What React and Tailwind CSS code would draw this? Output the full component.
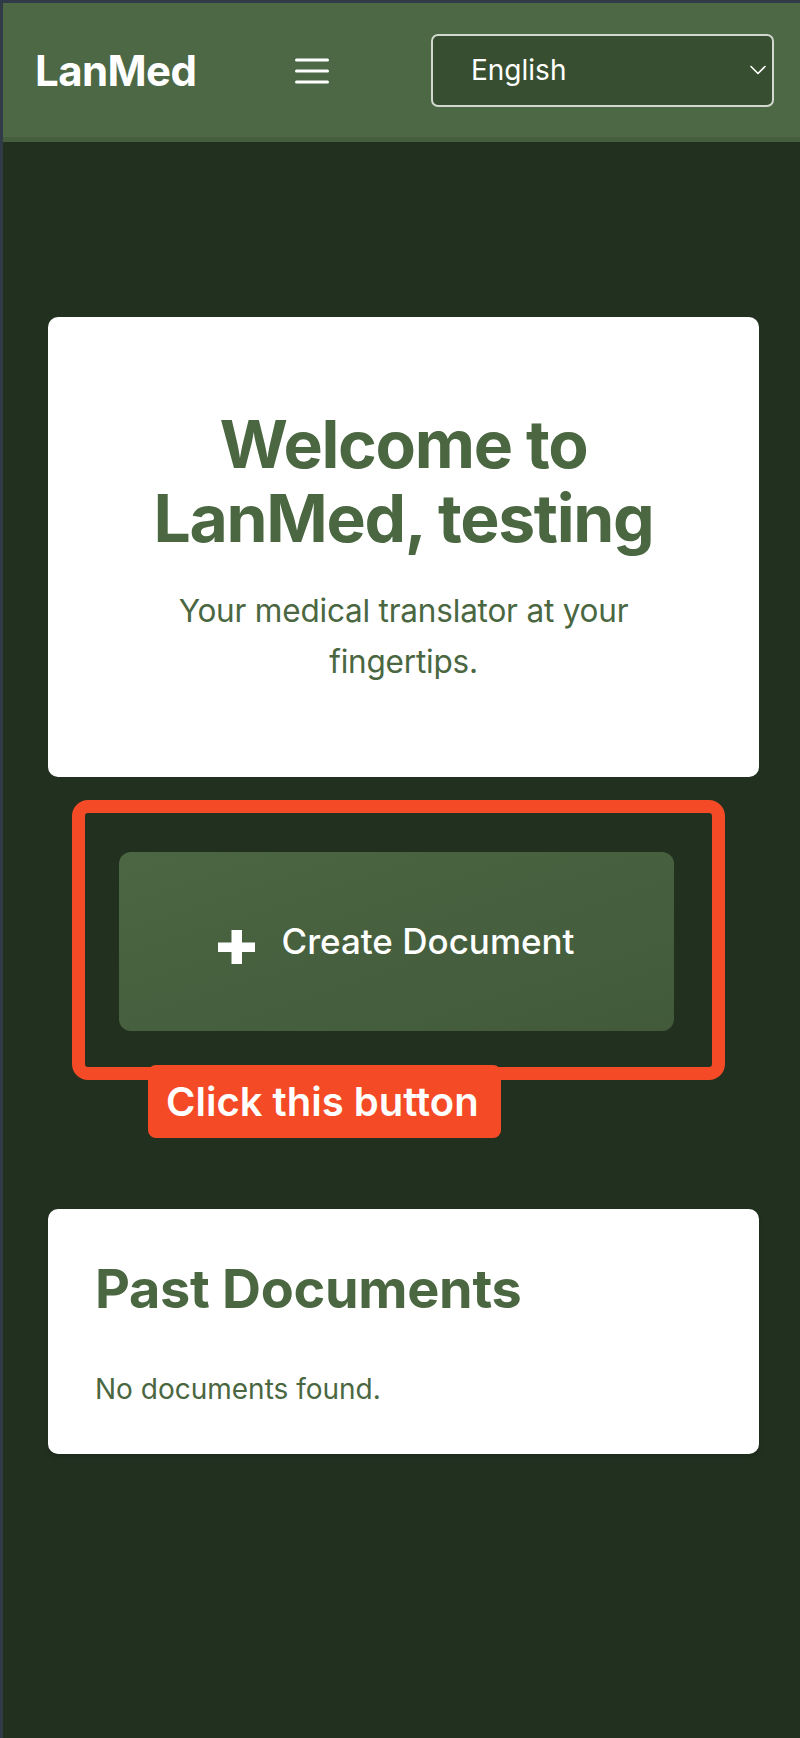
import { useState } from "react";

function Hamburger() {
  return (
    <svg width="34" height="26" viewBox="0 0 34 26" fill="none">
      <path d="M1.5 2h31M1.5 13h31M1.5 24h31" stroke="white" strokeWidth="3" strokeLinecap="round" />
    </svg>
  );
}

function Chevron() {
  return (
    <svg width="16" height="10" viewBox="0 0 16 10" fill="none">
      <path d="M1 1.5l7 7 7-7" stroke="white" strokeWidth="1.6" strokeLinecap="round" strokeLinejoin="round" />
    </svg>
  );
}

function PlusIcon() {
  return (
    <svg width="37" height="34" viewBox="0 0 37 34" fill="white">
      <rect x="0" y="12.5" width="37" height="9.5" />
      <rect x="13.5" y="0" width="10.5" height="34" />
    </svg>
  );
}

export default function App() {
  const [lang] = useState("English");

  return (
    <div className="min-h-screen bg-[#223020] border-l-[3px] border-t-[3px] border-[#313b48] font-['Inter',sans-serif]">
      <header className="h-[139px] bg-[#4c6844] border-b-[5px] border-[#455e3e] flex items-center pl-[32px] pr-[26px]">
        <h1 className="text-[42px] font-bold text-white tracking-[-0.6px] leading-none pt-[2px]">LanMed</h1>
        <button className="ml-[99px] mt-[2px]">
          <Hamburger />
        </button>
        <div className="ml-auto w-[343px] h-[73px] rounded-[7px] border-2 border-[#d3d8cf] bg-[#374f30] flex items-center justify-between pl-[38px] pr-[6px]">
          <span className="text-[28px] text-white leading-none">{lang}</span>
          <Chevron />
        </div>
      </header>

      <main className="pl-[45px] pr-[41px] pt-[175px] pb-[60px]">
        <section className="bg-white rounded-[10px] px-[47px] pt-[90px] pb-[90px] text-center text-[#4a6741]">
          <h2 className="text-[66px] leading-[74px] font-bold tracking-[-1.3px]">Welcome to LanMed, testing</h2>
          <p className="mt-[30px] mx-auto max-w-[520px] text-[31.5px] leading-[51px] tracking-[-0.2px]">
            Your medical translator at your fingertips.
          </p>
        </section>

        <div className="relative ml-[71px] w-[555px] mt-[75px]">
          <button className="w-full h-[179px] rounded-[12px] bg-linear-to-br from-[#4b6643] to-[#425a3a] flex items-center justify-center gap-[26px] text-white">
            <span className="mt-[11px]"><PlusIcon /></span>
            <span className="text-[35px] font-medium leading-none">Create Document</span>
          </button>
          <div className="absolute -left-[47px] -top-[52px] -right-[51px] -bottom-[49px] border-[13px] border-[#f44b26] rounded-[16px] pointer-events-none" />
          <div className="absolute left-[29px] top-[213px] h-[73px] w-[353px] bg-[#f44b26] rounded-[8px] flex items-center px-[18px]">
            <span className="text-[40px] font-semibold text-white leading-none whitespace-nowrap">Click this button</span>
          </div>
        </div>

        <section className="mt-[178px] bg-white rounded-[10px] px-[47px] pt-[47px] pb-[44px] text-[#4a6741] shadow-md">
          <h2 className="text-[54px] leading-[65px] font-bold tracking-[-0.3px]">Past Documents</h2>
          <p className="mt-[47px] text-[28px] leading-[42px]">No documents found.</p>
        </section>
      </main>
    </div>
  );
}
